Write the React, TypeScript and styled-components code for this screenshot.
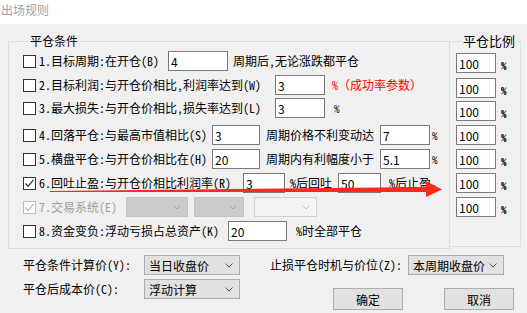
import styled, { createGlobalStyle } from 'styled-components';

const Global = createGlobalStyle`
  html, body {
    margin: 0;
    padding: 0;
    background: #f0f0f0;
  }
  body {
    font-family: "Noto Sans Mono CJK SC", "Noto Sans CJK SC", sans-serif;
    font-size: 12px;
    color: #000;
  }
`;

const Window = styled.div`
  position: relative;
  width: 527px;
  height: 313px;
  background: #f0f0f0;
  overflow: hidden;
`;

const TitleBar = styled.div`
  height: 24px;
  background: #fff;
  color: #a3a3a3;
  font-family: "Noto Sans CJK SC", sans-serif;
  font-size: 12px;
  line-height: 20px;
  padding-left: 1px;
  box-sizing: border-box;
`;

const Groups = styled.div`
  display: flex;
  padding: 10px 0 0 8px;
`;

const Group = styled.fieldset<{ $w: number; $h: number; $pad: string }>`
  box-sizing: border-box;
  width: ${p => p.$w}px;
  height: ${p => p.$h}px;
  margin: 0;
  padding: ${p => p.$pad};
  border: 1px solid #dcdcdc;
  min-inline-size: 0;
  & + & {
    margin-left: -1px;
  }
`;

const Legend = styled.legend<{ $size?: number }>`
  margin-left: 6px;
  padding: 0 1px;
  font-family: "Noto Sans CJK SC", sans-serif;
  font-size: ${p => p.$size ?? 12}px;
  line-height: 14px;
`;

const Row = styled.div<{ $mt?: number }>`
  display: flex;
  align-items: center;
  height: 20px;
  margin-top: ${p => p.$mt ?? 0}px;
  white-space: nowrap;
`;

const Box = styled.span<{ $disabled?: boolean }>`
  box-sizing: border-box;
  flex: none;
  width: 13px;
  height: 13px;
  border: 1px solid ${p => (p.$disabled ? '#bcbcbc' : '#333')};
  background: #fff;
  display: flex;
  align-items: center;
  justify-content: center;
`;

const Text = styled.span<{ $w?: number; $ml?: number; $color?: string; $size?: number }>`
  flex: none;
  width: ${p => (p.$w ? `${p.$w}px` : 'auto')};
  margin-left: ${p => p.$ml ?? 0}px;
  color: ${p => p.$color ?? '#000'};
  font-size: ${p => p.$size ?? 12}px;
  line-height: 20px;
`;

const Field = styled.input<{ $w: number }>`
  box-sizing: border-box;
  flex: none;
  width: ${p => p.$w}px;
  height: 20px;
  margin: 0;
  padding: 0 2px;
  border: 1px solid #7a7a7a;
  background: #fff;
  font-family: "Noto Sans CJK SC", sans-serif;
  font-size: 12px;
  color: #000;
  outline: none;
`;

const Pct = styled.span`
  margin-left: 5px;
  margin-top: 4px;
  font-size: 11px;
  font-weight: bold;
`;

type ComboKind = 'normal' | 'disabled' | 'blank';

const comboBg: Record<ComboKind, string> = { normal: '#e1e1e1', disabled: '#cccccc', blank: '#f4f4f4' };
const comboBorder: Record<ComboKind, string> = { normal: '#adadad', disabled: '#c2c2c2', blank: '#cfcfcf' };

const Combo = styled.div<{ $w: number; $ml?: number; $kind?: ComboKind }>`
  box-sizing: border-box;
  flex: none;
  width: ${p => p.$w}px;
  height: 20px;
  margin-left: ${p => p.$ml ?? 0}px;
  padding: 0 6px 0 4px;
  display: flex;
  align-items: center;
  justify-content: space-between;
  border: 1px solid ${p => comboBorder[p.$kind ?? 'normal']};
  background: ${p => comboBg[p.$kind ?? 'normal']};
  font-family: "Noto Sans CJK SC", sans-serif;
  font-size: 12px;
`;

const Ratios = styled.div`
  display: flex;
  flex-direction: column;
`;

const Bottom = styled.div`
  display: flex;
  gap: 30px;
  padding: 6px 0 0 23px;
`;

const Col = styled.div<{ $gap: number }>`
  display: flex;
  flex-direction: column;
  gap: ${p => p.$gap}px;
`;

const Buttons = styled.div`
  display: flex;
  gap: 41px;
  padding-left: 63px;
`;

const Button = styled.button`
  box-sizing: border-box;
  width: 70px;
  height: 22px;
  padding: 0;
  border: 1px solid #adadad;
  background: #e1e1e1;
  font-family: "Noto Sans CJK SC", sans-serif;
  font-size: 12px;
  color: #000;
`;

const Overlay = styled.svg`
  position: absolute;
  left: 0;
  top: 0;
  pointer-events: none;
`;

function Check({ checked, disabled }: { checked?: boolean; disabled?: boolean }) {
  return (
    <Box $disabled={disabled}>
      {checked && (
        <svg width="11" height="11" viewBox="0 0 11 11">
          <path d="M1.5 5.5 L4.2 8.3 L9.5 1.8" fill="none" stroke={disabled ? '#bcbcbc' : '#333'} strokeWidth="1.3" />
        </svg>
      )}
    </Box>
  );
}

function Chevron({ color = '#555' }: { color?: string }) {
  return (
    <svg width="8" height="5" viewBox="0 0 8 5">
      <path d="M0.5 0.5 L4 4 L7.5 0.5" fill="none" stroke={color} strokeWidth="1" />
    </svg>
  );
}

const ratios = [0, 5, 3, 4, 4, 4, 4];

export default function App() {
  return (
    <Window>
      <Global />
      <TitleBar>出场规则</TitleBar>

      <Groups>
        <Group $w={442} $h={215} $pad="3px 0 0 14px">
          <Legend>平仓条件</Legend>

          <Row>
            <Check />
            <Text $ml={3} $w={129}>1.目标周期:在开仓(B)</Text>
            <Field $w={60} defaultValue="4" />
            <Text $ml={5}>周期后,无论涨跌都平仓</Text>
          </Row>

          <Row $mt={4}>
            <Check />
            <Text $ml={3} $w={236}>2.目标利润:与开仓价相比,利润率达到(W)</Text>
            <Field $w={50} defaultValue="3" />
            <Text $ml={7} $color="#ff0000">%（成功率参数）</Text>
          </Row>

          <Row $mt={3}>
            <Check />
            <Text $ml={3} $w={236}>3.最大损失:与开仓价相比,损失率达到(L)</Text>
            <Field $w={50} defaultValue="3" />
            <Text $ml={9} $size={11}>%</Text>
          </Row>

          <Row $mt={7}>
            <Check />
            <Text $ml={3} $w={173}>4.回落平仓:与最高市值相比(S)</Text>
            <Field $w={48} defaultValue="3" />
            <Text $ml={6} $w={114}>周期价格不利变动达</Text>
            <Field $w={50} defaultValue="7" />
            <Text $ml={2} $size={11}>%</Text>
          </Row>

          <Row $mt={4}>
            <Check />
            <Text $ml={3} $w={173}>5.横盘平仓:与开仓价相比在(H)</Text>
            <Field $w={48} defaultValue="20" />
            <Text $ml={6} $w={114}>周期内有利幅度小于</Text>
            <Field $w={50} defaultValue="5.1" />
            <Text $ml={2} $size={11}>%</Text>
          </Row>

          <Row $mt={4}>
            <Check checked />
            <Text $ml={3} $w={204}>6.回吐止盈:与开仓价相比利润率(R)</Text>
            <Field $w={42} defaultValue="3" />
            <Text $ml={5} $w={48}>%后回吐</Text>
            <Field $w={43} defaultValue="50" />
            <Text $ml={8}>%后止盈。</Text>
          </Row>

          <Row $mt={4}>
            <Check checked disabled />
            <Text $ml={3} $w={87} $color="#a0a0a0">7.交易系统(E)</Text>
            <Combo $w={62} $kind="disabled">
              <span />
              <Chevron color="#a6a6a6" />
            </Combo>
            <Combo $w={50} $ml={6} $kind="disabled">
              <span />
              <Chevron color="#a6a6a6" />
            </Combo>
            <Combo $w={63} $ml={10} $kind="blank">
              <span />
              <Chevron color="#c4c4c4" />
            </Combo>
          </Row>

          <Row $mt={4}>
            <Check />
            <Text $ml={3} $w={189}>8.资金变负:浮动亏损占总资产(K)</Text>
            <Field $w={59} defaultValue="20" />
            <Text $ml={9}>%时全部平仓</Text>
          </Row>
        </Group>

        <Group $w={72} $h={213} $pad="5px 0 0 6px">
          <Legend $size={13}>平仓比例</Legend>
          <Ratios>
            {ratios.map((mt, i) => (
              <Row key={i} $mt={mt}>
                <Field $w={40} defaultValue="100" />
                <Pct>%</Pct>
              </Row>
            ))}
          </Ratios>
        </Group>
      </Groups>

      <Bottom>
        <Col $gap={4}>
          <Row>
            <Text $w={121}>平仓条件计算价(Y):</Text>
            <Combo $w={96}>
              <span>当日收盘价</span>
              <Chevron />
            </Combo>
          </Row>
          <Row>
            <Text $w={121}>平仓后成本价(C):</Text>
            <Combo $w={96}>
              <span>浮动计算</span>
              <Chevron />
            </Combo>
          </Row>
        </Col>
        <Col $gap={13}>
          <Row>
            <Text $w={138}>止损平仓时机与价位(Z):</Text>
            <Combo $w={96}>
              <span>本周期收盘价</span>
              <Chevron />
            </Combo>
          </Row>
          <Buttons>
            <Button>确定</Button>
            <Button>取消</Button>
          </Buttons>
        </Col>
      </Bottom>

      <Overlay width="527" height="313" viewBox="0 0 527 313">
        <polygon points="50,191 428,187 428,192 50,192" fill="#ff2a1f" />
        <polygon points="426,181 442,189.5 426,197" fill="#ff2a1f" />
      </Overlay>
    </Window>
  );
}
